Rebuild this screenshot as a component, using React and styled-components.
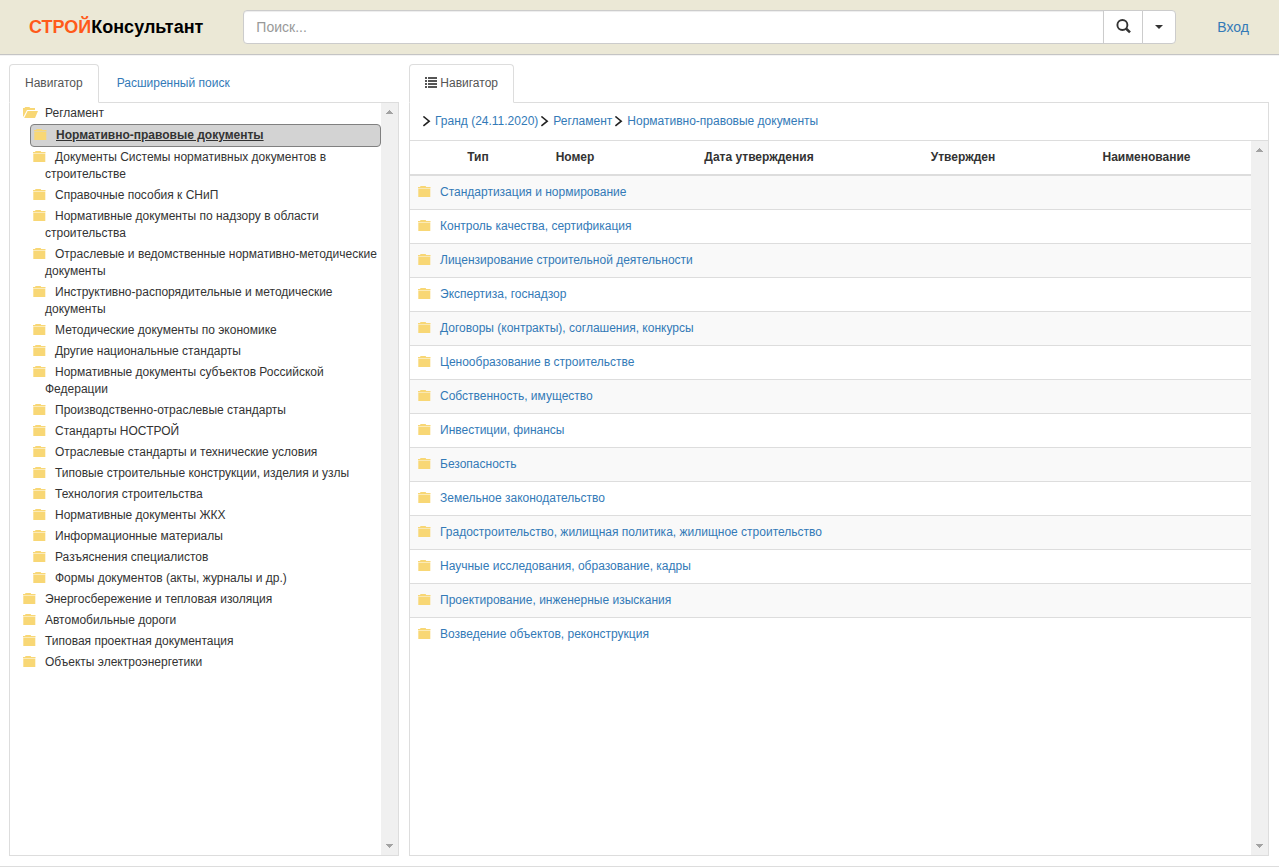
import styled, { createGlobalStyle, css } from 'styled-components';
import { useState } from 'react';

const sections = [
  'Нормативно-правовые документы',
  'Документы Системы нормативных документов в строительстве',
  'Справочные пособия к СНиП',
  'Нормативные документы по надзору в области строительства',
  'Отраслевые и ведомственные нормативно-методические документы',
  'Инструктивно-распорядительные и методические документы',
  'Методические документы по экономике',
  'Другие национальные стандарты',
  'Нормативные документы субъектов Российской Федерации',
  'Производственно-отраслевые стандарты',
  'Стандарты НОСТРОЙ',
  'Отраслевые стандарты и технические условия',
  'Типовые строительные конструкции, изделия и узлы',
  'Технология строительства',
  'Нормативные документы ЖКХ',
  'Информационные материалы',
  'Разъяснения специалистов',
  'Формы документов (акты, журналы и др.)',
];

const otherRoots = [
  'Энергосбережение и тепловая изоляция',
  'Автомобильные дороги',
  'Типовая проектная документация',
  'Объекты электроэнергетики',
];

const folders = [
  'Стандартизация и нормирование',
  'Контроль качества, сертификация',
  'Лицензирование строительной деятельности',
  'Экспертиза, госнадзор',
  'Договоры (контракты), соглашения, конкурсы',
  'Ценообразование в строительстве',
  'Собственность, имущество',
  'Инвестиции, финансы',
  'Безопасность',
  'Земельное законодательство',
  'Градостроительство, жилищная политика, жилищное строительство',
  'Научные исследования, образование, кадры',
  'Проектирование, инженерные изыскания',
  'Возведение объектов, реконструкция',
];

const crumbs = [
  'Гранд (24.11.2020)',
  'Регламент',
  'Нормативно-правовые документы',
];

export default function App() {
  const [selected, setSelected] = useState(sections[0]);

  return (
    <Page>
      <GlobalStyle />
      <Header>
        <Logo href="#">
          <span>СТРОЙ</span>Консультант
        </Logo>
        <SearchForm onSubmit={handleSearch}>
          <SearchInput type="text" placeholder="Поиск..." aria-label="Поиск" />
          <SearchButton type="submit" aria-label="Найти">
            <SearchIcon />
          </SearchButton>
          <MenuButton type="button" aria-label="Параметры поиска">
            <Caret />
          </MenuButton>
        </SearchForm>
        <LoginLink href="#">Вход</LoginLink>
      </Header>

      <Main>
        <Panel>
          <Tabs>
            <Tab href="#" $active>
              Навигатор
            </Tab>
            <Tab href="#">Расширенный поиск</Tab>
          </Tabs>
          <PanelBody>
            <ScrollArea>
              <ScrollContent>
                <Tree>
                  <li>
                    <RootLink href="#">
                      <OpenFolderIcon />
                      Регламент
                    </RootLink>
                    <Tree>
                      {sections.map((name) => (
                        <li key={name}>
                          <BranchLink
                            href="#"
                            $selected={name === selected}
                            onClick={() => setSelected(name)}
                          >
                            <FolderIcon />
                            {name}
                          </BranchLink>
                        </li>
                      ))}
                    </Tree>
                  </li>
                  {otherRoots.map((name) => (
                    <li key={name}>
                      <RootLink href="#">
                        <FolderIcon />
                        {name}
                      </RootLink>
                    </li>
                  ))}
                </Tree>
              </ScrollContent>
              <ScrollTrack />
            </ScrollArea>
          </PanelBody>
        </Panel>

        <Panel>
          <Tabs>
            <Tab href="#" $active>
              <ListIcon /> Навигатор
            </Tab>
          </Tabs>
          <PanelBody>
            <Breadcrumbs>
              {crumbs.map((name) => (
                <Crumb key={name}>
                  <ChevronIcon />
                  <a href="#">{name}</a>
                </Crumb>
              ))}
            </Breadcrumbs>
            <ScrollArea>
              <ScrollContent>
                <Table>
                  <colgroup>
                    <Column $width={30} />
                    <Column $width={76} />
                    <Column $width={118} />
                    <Column $width={250} />
                    <Column $width={158} />
                    <col />
                  </colgroup>
                  <thead>
                    <tr>
                      <th></th>
                      <th>Тип</th>
                      <th>Номер</th>
                      <th>Дата утверждения</th>
                      <th>Утвержден</th>
                      <th>Наименование</th>
                    </tr>
                  </thead>
                  <tbody>
                    {folders.map((name) => (
                      <tr key={name}>
                        <td>
                          <FolderIcon />
                        </td>
                        <td colSpan={5}>
                          <a href="#">{name}</a>
                        </td>
                      </tr>
                    ))}
                  </tbody>
                </Table>
              </ScrollContent>
              <ScrollTrack />
            </ScrollArea>
          </PanelBody>
        </Panel>
      </Main>
    </Page>
  );

  function handleSearch(event) {
    event.preventDefault();
  }
}

function FolderIcon() {
  return (
    <Icon width="13" height="11" viewBox="0 0 13 11" fill="#f8d775">
      <path d="M2.6 0h5l0.6 1H12.5v1.3H0V1h2zM0.3 2.8h12V11h-12z" />
    </Icon>
  );
}

function OpenFolderIcon() {
  return (
    <OpenIcon width="15" height="11" viewBox="0 0 15 11" fill="#f8d775">
      <path d="M0 1h1.5l0.8-1h4l1 1H12v2H4L0.6 9.6H0z" />
      <path d="M4.6 4H15l-3 7H1.2z" />
    </OpenIcon>
  );
}

function ListIcon() {
  return (
    <InlineIcon width="12" height="11" viewBox="0 0 12 11" fill="#555">
      <path d="M0 0h2v2H0zM3 0h9v2H3zM0 3h2v2H0zM3 3h9v2H3zM0 6h2v2H0zM3 6h9v2H3zM0 9h2v2H0zM3 9h9v2H3z" />
    </InlineIcon>
  );
}

function ChevronIcon() {
  return (
    <svg width="9" height="12" viewBox="0 0 9 12" fill="none">
      <path d="M1.4 0.5L7.2 5.2L1.4 9.9" stroke="#222" strokeWidth="1.6" />
    </svg>
  );
}

function SearchIcon() {
  return (
    <svg width="15" height="16" viewBox="0 0 15 16" fill="none" stroke="#333">
      <circle cx="6.4" cy="6" r="5" strokeWidth="1.9" />
      <path d="M10 9.5L14 13.4" strokeWidth="2.5" />
    </svg>
  );
}

function Caret() {
  return (
    <svg width="8" height="4" viewBox="0 0 8 4" fill="#333">
      <path d="M0 0h8L4 4z" />
    </svg>
  );
}

function ScrollTrack() {
  return (
    <Track aria-hidden="true">
      <svg width="7" height="4" viewBox="0 0 7 4" fill="#a3a3a3">
        <path d="M3 0h1v1h1v1h1v1h1v1H0V3h1V2h1V1h1z" />
      </svg>
      <svg width="7" height="4" viewBox="0 0 7 4" fill="#a3a3a3">
        <path d="M0 0h7v1H6v1H5v1H4v1H3V3H2V2H1V1H0z" />
      </svg>
    </Track>
  );
}

const GlobalStyle = createGlobalStyle`
  * {
    box-sizing: border-box;
  }

  body {
    margin: 0;
    font-family: 'Liberation Sans', Arial, sans-serif;
    font-size: 12px;
    line-height: 17px;
    color: #333;
    background-color: #fff;
  }

  a {
    color: #337ab7;
    text-decoration: none;
  }
`;

const Page = styled.div`
  display: flex;
  flex-direction: column;
  height: 100vh;
  border-bottom: 1px solid #ddd;
`;

const Header = styled.header`
  display: flex;
  align-items: center;
  height: 55px;
  padding: 0 30px 0 29px;
  background-color: #ebe8d6;
  border-bottom: 1px solid #c4c4c4;
  box-shadow: 0 1px 0 #f3f3f3;
`;

const Logo = styled.a`
  margin-right: 40px;
  font-size: 18px;
  font-weight: bold;
  line-height: 20px;
  color: #000;

  span {
    color: #ff5a1a;
  }
`;

const SearchForm = styled.form`
  display: flex;
  flex: 1;
  height: 34px;
  margin-right: 41px;
`;

const SearchInput = styled.input`
  flex: 1;
  min-width: 0;
  padding: 6px 12px;
  font-family: inherit;
  font-size: 14px;
  color: #555;
  background-color: #fff;
  border: 1px solid #ccc;
  border-radius: 4px 0 0 4px;
  box-shadow: inset 0 1px 1px rgba(0, 0, 0, 0.075);

  &::placeholder {
    color: #999;
  }
`;

const SearchButton = styled.button`
  display: flex;
  align-items: center;
  justify-content: center;
  width: 40px;
  padding: 0;
  margin-left: -1px;
  background-color: #fff;
  border: 1px solid #ccc;
`;

const MenuButton = styled(SearchButton)`
  width: 34px;
  border-radius: 0 4px 4px 0;
`;

const LoginLink = styled.a`
  font-size: 14px;
  line-height: 20px;
`;

const Main = styled.main`
  display: grid;
  flex: 1;
  grid-template-columns: minmax(0, 39fr) minmax(0, 86fr);
  gap: 10px;
  min-height: 0;
  padding: 9px 10px 10px 9px;
`;

const Panel = styled.section`
  display: flex;
  flex-direction: column;
  min-height: 0;
`;

const Tabs = styled.nav`
  display: flex;
  gap: 2px;
  border-bottom: 1px solid #ddd;
`;

const Tab = styled.a`
  padding: 10px 15px;
  margin-bottom: -1px;
  border: 1px solid transparent;
  border-radius: 4px 4px 0 0;

  ${({ $active }) =>
    $active &&
    css`
      color: #555;
      background-color: #fff;
      border-color: #ddd #ddd #fff;
    `}
`;

const PanelBody = styled.div`
  display: flex;
  flex: 1;
  flex-direction: column;
  min-height: 0;
  border: 1px solid #ddd;
  border-top: none;
`;

const ScrollArea = styled.div`
  display: flex;
  flex: 1;
  min-height: 0;
`;

const ScrollContent = styled.div`
  flex: 1;
  min-width: 0;
  overflow: hidden;
`;

const Track = styled.div`
  display: flex;
  flex-direction: column;
  align-items: center;
  justify-content: space-between;
  width: 17px;
  padding: 7px 0;
  background-color: #f0f0f0;
`;

const Icon = styled.svg`
  margin-right: 9px;
  vertical-align: -1px;
`;

const OpenIcon = styled(Icon)`
  margin-right: 7px;
`;

const InlineIcon = styled.svg`
  vertical-align: -1px;
`;

const Tree = styled.ul`
  padding: 0;
  margin: 0;
  list-style: none;
`;

const RootLink = styled.a`
  display: block;
  padding: 2px 0 2px 13px;
  color: #333;
`;

const BranchLink = styled.a`
  display: block;
  padding: 2px 0 2px 15px;
  margin-left: 20px;
  text-indent: -12px;
  color: #333;

  ${({ $selected }) =>
    $selected &&
    css`
      font-weight: bold;
      text-decoration: underline;
      background-color: #d3d3d3;
      border: 1px solid #808080;
      border-radius: 4px;
    `}
`;

const Breadcrumbs = styled.nav`
  display: flex;
  gap: 2px;
  padding: 10px 12px;
  border-bottom: 1px solid #ddd;
`;

const Crumb = styled.span`
  display: flex;
  gap: 4px;
  align-items: center;
`;

const Table = styled.table`
  width: 100%;
  table-layout: fixed;
  border-spacing: 0;

  th {
    padding: 8px;
    border-bottom: 2px solid #ddd;
  }

  td {
    padding: 8px 0;
    border-top: 1px solid #ddd;
  }

  td:first-child {
    padding-left: 8px;
  }

  tbody tr:first-child td {
    border-top: none;
  }

  tbody tr:nth-child(odd) {
    background-color: #f9f9f9;
  }
`;

const Column = styled.col`
  width: ${({ $width }) => $width}px;
`;
